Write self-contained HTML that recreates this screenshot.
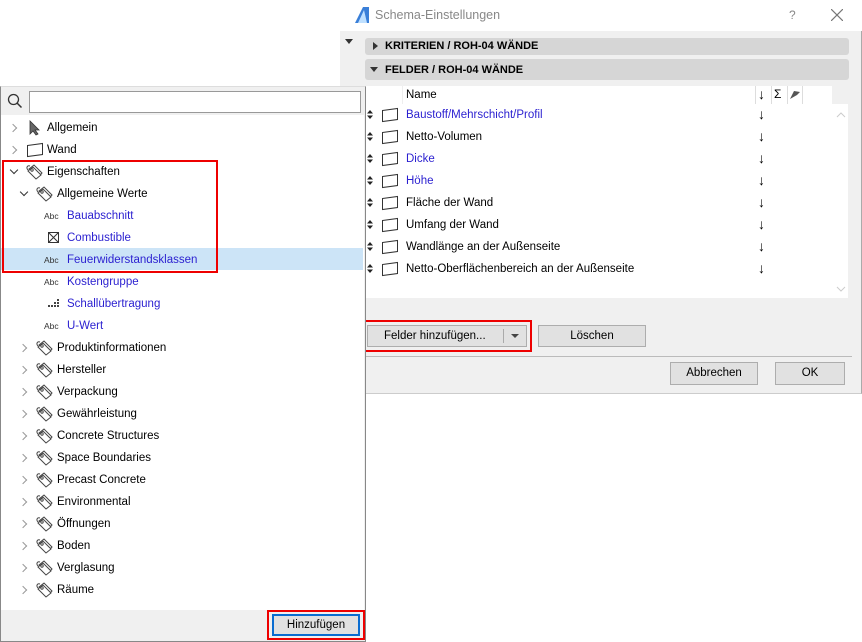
<!DOCTYPE html>
<html><head><meta charset="utf-8"><style>
*{box-sizing:border-box;margin:0;padding:0}
body{width:862px;height:642px;background:#fff;position:relative;overflow:hidden;font-family:"Liberation Sans",sans-serif;font-size:11.5px;color:#000}
.a{position:absolute}
.row{position:absolute;height:22px;line-height:24px;white-space:nowrap}
.blue{color:#2a1fd0}
.btn{position:absolute;background:#e1e1e1;border:1px solid #adadad;text-align:center;line-height:21px;font-size:11.5px}
.chev{position:absolute;width:6px;height:6px;border-right:1.5px solid #999;border-bottom:1.5px solid #999}
.r{transform:rotate(-45deg)}
.d{transform:rotate(45deg);border-color:#333}
</style></head><body>
<div class="a" style="left:340px;top:0;width:522px;height:394px;background:#f0f0f0;border-right:1px solid #aaa;border-bottom:1px solid #ccc"></div>
<div class="a" style="left:340px;top:0;width:522px;height:31px;background:#fff"></div>
<svg class="a" style="left:354px;top:6px" width="16" height="18"><path d="M1 17 L9 1 L15 1 L15 17 Z" fill="#3a7fd8"/><path d="M4 17 L10 4 L13 17Z" fill="#bfe0ff"/></svg>
<div class="a" style="left:375px;top:8px;color:#888;font-size:12.5px">Schema-Einstellungen</div>
<div class="a" style="left:789px;top:8px;color:#888;font-size:12px">?</div>
<svg class="a" style="left:831px;top:9px" width="12" height="12"><path d="M0 0L12 12M12 0L0 12" stroke="#777" stroke-width="1.2"/></svg>
<div class="a" style="left:345px;top:39px;border:4px solid transparent;border-top:5px solid #333"></div>
<div class="a" style="left:365px;top:38px;width:484px;height:17px;background:#d6d6d6;border-radius:3px"></div>
<div class="a" style="left:373px;top:42px;border:4px solid transparent;border-left:5px solid #333"></div>
<div class="a" style="left:385px;top:40px;font-weight:bold;font-size:11px">KRITERIEN / ROH-04 WÄNDE</div>
<div class="a" style="left:365px;top:59px;width:484px;height:21px;background:#d6d6d6;border-radius:3px"></div>
<div class="a" style="left:370px;top:67px;border:4px solid transparent;border-top:5px solid #333"></div>
<div class="a" style="left:385px;top:64px;font-weight:bold;font-size:11px">FELDER / ROH-04 WÄNDE</div>
<div class="a" style="left:366px;top:86px;width:466px;height:212px;background:#fff"></div>
<div class="a" style="left:832px;top:104px;width:16px;height:194px;background:#fff"></div>
<div class="a" style="left:402px;top:86px;width:1px;height:18px;background:#eee"></div>
<div class="a" style="left:406px;top:89px">Name</div>
<div class="a" style="left:755px;top:86px;width:1px;height:18px;background:#ddd"></div>
<div class="a" style="left:771px;top:86px;width:1px;height:18px;background:#ddd"></div>
<div class="a" style="left:787px;top:86px;width:1px;height:18px;background:#ddd"></div>
<div class="a" style="left:802px;top:86px;width:1px;height:18px;background:#ddd"></div>
<div class="a" style="left:758px;top:86px;font-size:14px">↓</div>
<div class="a" style="left:774px;top:87px;font-size:12px">Σ</div>
<svg class="a" style="left:789px;top:89px" width="12" height="11"><path d="M1 10L5 2L11 3L8 6Z" fill="#555"/></svg>
<svg class="a" style="left:836px;top:112px" width="10" height="6"><path d="M1 5L5 1L9 5" fill="none" stroke="#ccc"/></svg>
<svg class="a" style="left:836px;top:286px" width="10" height="6"><path d="M1 1L5 5L9 1" fill="none" stroke="#ccc"/></svg>
<div id="rows"></div>
<div class="a" style="left:362px;top:320px;width:170px;height:32px;border:2px solid #e00"></div>
<div class="btn" style="left:367px;top:325px;width:160px;height:22px;text-align:left;padding-left:16px">Felder hinzufügen...</div>
<div class="a" style="left:503px;top:329px;width:1px;height:14px;background:#aaa"></div>
<div class="a" style="left:511px;top:334px;border:4px solid transparent;border-top:4px solid #444"></div>
<div class="btn" style="left:538px;top:325px;width:108px;height:22px">Löschen</div>
<div class="a" style="left:366px;top:356px;width:486px;height:1px;background:#bbb"></div>
<div class="btn" style="left:670px;top:362px;width:88px;height:23px">Abbrechen</div>
<div class="btn" style="left:775px;top:362px;width:70px;height:23px">OK</div>
<div class="a" style="left:0;top:86px;width:366px;height:556px;background:#f0f0f0;border:1px solid #888;border-top:1px solid #ddd"></div>
<div class="a" style="left:1px;top:115px;width:363px;height:495px;background:#fff"></div>
<svg class="a" style="left:7px;top:93px" width="16" height="16"><circle cx="6.5" cy="6.5" r="5" fill="none" stroke="#333" stroke-width="1.3"/><path d="M10 10L14.5 14.5" stroke="#333" stroke-width="1.5"/></svg>
<div class="a" style="left:29px;top:91px;width:332px;height:22px;background:#fff;border:1px solid #999"></div>
<div class="a" style="left:1px;top:248px;width:362px;height:22px;background:#cce4f7"></div>
<div class="a" style="left:2px;top:160px;width:216px;height:113px;border:2px solid #e00"></div>
<div class="a" style="left:267px;top:610px;width:98px;height:30px;border:2px solid #e00"></div>
<div class="btn" style="left:272px;top:614px;width:88px;height:22px;border:2px solid #0a6cd0;background:#e1e1e1;line-height:19px">Hinzufügen</div>
<div id="tree"></div>
<script>
var tag='<svg width="18" height="16" viewBox="0 0 18 16"><g fill="none" stroke="#444" stroke-width="1"><path d="M3 5L8 1L16 9L11 14Z"/><path d="M2 7L7 3L15 11L10 15Z" fill="#fff"/><circle cx="6" cy="6" r="1.2"/><path d="M4 2C1 1 0 4 2 6"/></g></svg>';
var wall='<svg width="18" height="16"><path d="M1.5 3.5L16.5 1.5L16.5 12.5L1.5 14.5Z" fill="#fff" stroke="#333"/></svg>';
var h='';
var T=[
[0,'c','arrow','Allgemein',0],[0,'c','wall','Wand',0],[0,'o','tag','Eigenschaften',0],[1,'o','tag','Allgemeine Werte',0],
[2,'','abc','Bauabschnitt',1],[2,'','box','Combustible',1],[2,'','abc','Feuerwiderstandsklassen',1],[2,'','abc','Kostengruppe',1],[2,'','grid','Schallübertragung',1],[2,'','abc','U-Wert',1],
[1,'c','tag','Produktinformationen',0],[1,'c','tag','Hersteller',0],[1,'c','tag','Verpackung',0],[1,'c','tag','Gewährleistung',0],[1,'c','tag','Concrete Structures',0],[1,'c','tag','Space Boundaries',0],[1,'c','tag','Precast Concrete',0],[1,'c','tag','Environmental',0],[1,'c','tag','Öffnungen',0],[1,'c','tag','Boden',0],[1,'c','tag','Verglasung',0],[1,'c','tag','Räume',0]];
T.forEach(function(t,i){var y=116+i*22;var L=t[0];
 var cx=L==0?10:L==1?20:0;var ix=L==0?26:L==1?36:44;var tx=L==0?47:L==1?57:67;
 if(t[1]=='c')h+='<div class="chev r" style="left:'+cx+'px;top:'+(y+9)+'px"></div>';
 if(t[1]=='o')h+='<div class="chev d" style="left:'+(cx+1)+'px;top:'+(y+7)+'px"></div>';
 var ic='';
 if(t[2]=='tag')ic=tag;else if(t[2]=='wall')ic=wall;
 else if(t[2]=='arrow')ic='<svg width="18" height="16"><path d="M4 1L4 14L7 11L10 15L12 14L9 10L13 10Z" fill="#666" stroke="#333" stroke-width=".8"/></svg>';
 else if(t[2]=='abc')ic='<span style="font-size:8.5px;color:#333;line-height:16px">Abc</span>';
 else if(t[2]=='box')ic='<svg width="18" height="16"><rect x="4.5" y="2.5" width="10" height="10" fill="none" stroke="#333"/><path d="M5 3L14 12M14 3L5 12" stroke="#333"/></svg>';
 else if(t[2]=='grid')ic='<svg width="18" height="16"><g fill="#444"><rect x="13" y="3" width="2" height="2"/><rect x="10" y="6" width="2" height="2"/><rect x="13" y="6" width="2" height="2"/><rect x="7" y="9" width="2" height="2"/><rect x="10" y="9" width="2" height="2"/><rect x="13" y="9" width="2" height="2"/><rect x="4" y="9" width="2" height="2"/></g></svg>';
 h+='<div class="a" style="left:'+ix+'px;top:'+(y+4)+'px;width:18px;height:16px">'+ic+'</div>';
 h+='<div class="row'+(t[4]?' blue':'')+'" style="left:'+tx+'px;top:'+y+'px">'+t[3]+'</div>';
});
document.getElementById('tree').innerHTML=h;
var R=[['Baustoff/Mehrschicht/Profil',1],['Netto-Volumen',0],['Dicke',1],['Höhe',1],['Fläche der Wand',0],['Umfang der Wand',0],['Wandlänge an der Außenseite',0],['Netto-Oberflächenbereich an der Außenseite',0]];
var g='';
R.forEach(function(r,i){var y=103+i*22;
 g+='<svg class="a" style="left:367px;top:'+(y+7)+'px" width="6" height="9"><path d="M0 3.5L3 0L6 3.5ZM0 5.5L3 9L6 5.5Z" fill="#222"/></svg>';
 g+='<div class="a" style="left:381px;top:'+(y+4)+'px">'+wall+'</div>';
 g+='<div class="row'+(r[1]?' blue':'')+'" style="left:406px;top:'+y+'px">'+r[0]+'</div>';
 g+='<div class="a" style="left:758px;top:'+(y+3)+'px;font-size:14px">↓</div>';});
document.getElementById('rows').innerHTML=g;
</script>
</body></html>
